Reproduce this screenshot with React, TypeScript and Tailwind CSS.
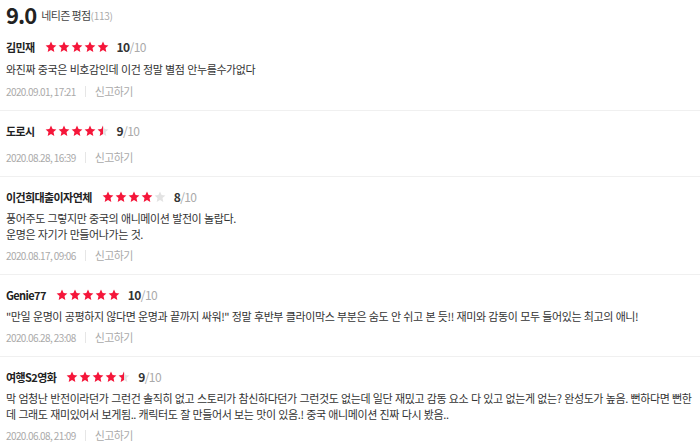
import React from "react";

type Review = {
  name: string;
  score: number;
  text: string[];
  date: string;
};

const reviews: Review[] = [
  { name: "김민재", score: 10, text: ["와진짜 중국은 비호감인데 이건 정말 별점 안누를수가없다"], date: "2020.09.01, 17:21" },
  { name: "도로시", score: 9, text: [], date: "2020.08.28, 16:39" },
  {
    name: "이건희대출이자연체",
    score: 8,
    text: ["풍어주도 그렇지만 중국의 애니메이션 발전이 놀랍다.", "운명은 자기가 만들어나가는 것."],
    date: "2020.08.17, 09:06",
  },
  {
    name: "Genie77",
    score: 10,
    text: ['"만일 운명이 공평하지 않다면 운명과 끝까지 싸워!" 정말 후반부 클라이막스 부분은 숨도 안 쉬고 본 듯!! 재미와 감동이 모두 들어있는 최고의 애니!'],
    date: "2020.06.28, 23:08",
  },
  {
    name: "여행S2영화",
    score: 9,
    text: [
      "막 엄청난 반전이라던가 그런건 솔직히 없고 스토리가 참신하다던가 그런것도 없는데 일단 재밌고 감동 요소 다 있고 없는게 없는? 완성도가 높음. 뻔하다면 뻔한데 그래도 재미있어서 보게됨.. 캐릭터도 잘 만들어서 보는 맛이 있음.! 중국 애니메이션 진짜 다시 봤음..",
    ],
    date: "2020.06.08, 21:09",
  },
];

const STAR = "M6 0.6l1.6 3.5 3.8.4-2.9 2.6.8 3.8L6 9 2.7 10.9l.8-3.8L.6 4.5l3.8-.4z";

function Star({ fill }: { fill: "full" | "half" | "empty" }) {
  return (
    <svg width="12" height="12" viewBox="0 0 12 12" className="shrink-0">
      <defs>
        <clipPath id="half-left">
          <rect x="0" y="0" width="6" height="12" />
        </clipPath>
      </defs>
      <path d={STAR} fill={fill === "full" ? "#f5163a" : "#e3e3e3"} />
      {fill === "half" && <path d={STAR} fill="#f5163a" clipPath="url(#half-left)" />}
    </svg>
  );
}

function Stars({ score }: { score: number }) {
  const stars = [0, 1, 2, 3, 4].map((i) => {
    const v = score - i * 2;
    return v >= 2 ? "full" : v === 1 ? "half" : "empty";
  });
  return (
    <div className="flex items-center gap-[1px]">
      {stars.map((s, i) => (
        <Star key={i} fill={s as "full" | "half" | "empty"} />
      ))}
    </div>
  );
}

export default function App() {
  return (
    <div className="h-[443px] w-[700px] overflow-hidden bg-white font-['Noto_Sans_CJK_KR',sans-serif] text-[#333]">
      <div className="flex h-[28px] items-center gap-[5px] pl-[6px]">
        <span className="text-[22px] font-bold leading-[28px] tracking-[-1px] text-[#222]">9.0</span>
        <span className="pt-[3px] text-[11px] leading-[16px] tracking-[-0.6px] text-[#444]">
          네티즌 평점<span className="text-[10px] tracking-[-0.3px] text-[#aaa]">(113)</span>
        </span>
      </div>
      <ul>
        {reviews.map((r, i) => (
          <li
            key={r.name}
            className={`flex flex-col border-b border-[#f0f0f0] pb-[11px] pl-[6px] pr-[8px] ${i === 0 ? "pt-[10px]" : "pt-[11px]"}`}
          >
            <div className="flex h-[18px] items-center">
              <span className="text-[11px] font-bold tracking-[-0.6px] text-[#222]">{r.name}</span>
              <div className="ml-[10px]">
                <Stars score={r.score} />
              </div>
              <span className="ml-[8px] text-[12px] tracking-[-0.6px]">
                <b className="text-[#333]">{r.score}</b>
                <span className="text-[#aaa]">/10</span>
              </span>
            </div>
            <p
              className={`break-all text-[11px] leading-[16px] tracking-[-0.4px] [word-spacing:0.6px] text-[#333] ${i === 0 ? "mt-[5px]" : "mt-[4px]"}`}
            >
              {r.text.map((t, j) => (
                <span key={j}>
                  {t}
                  {j < r.text.length - 1 && <br />}
                </span>
              ))}
            </p>
            <div
              className={`flex h-[16px] items-center text-[10px] tracking-[-0.6px] text-[#aaa] ${i === 0 ? "mt-[6px]" : "mt-[5px]"}`}
            >
              <span>{r.date}</span>
              <span className="mx-[9px] h-[11px] w-px bg-[#e6e6e6]" />
              <span className="text-[11px] tracking-[-0.6px]">신고하기</span>
            </div>
          </li>
        ))}
      </ul>
    </div>
  );
}
